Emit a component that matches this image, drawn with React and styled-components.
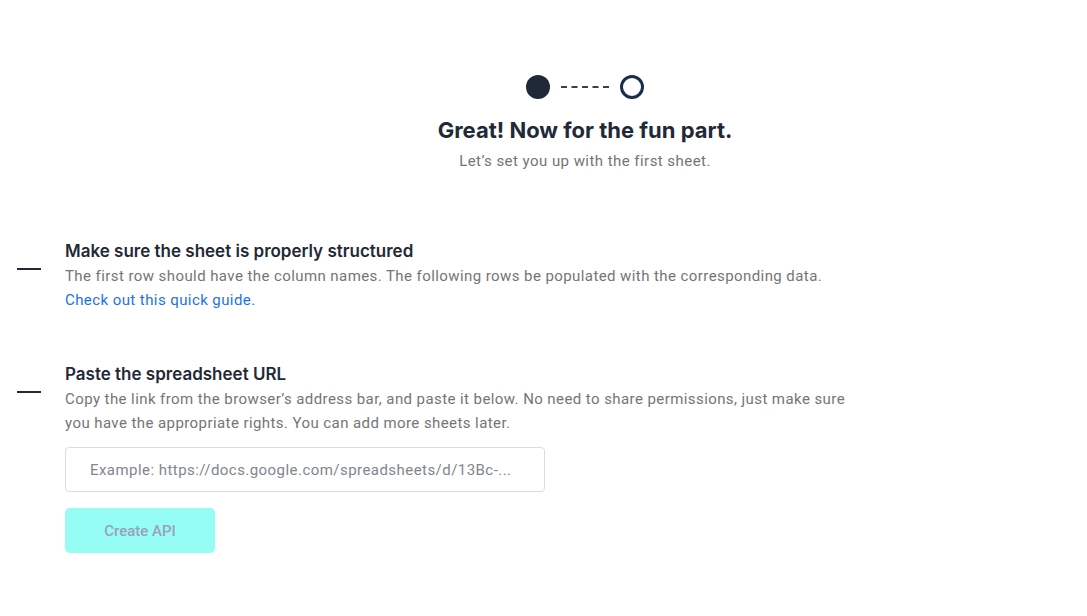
import styled, { createGlobalStyle } from "styled-components";

const GlobalStyle = createGlobalStyle`
  html, body {
    margin: 0;
    padding: 0;
    background: #ffffff;
    font-family: Inter, "Noto Sans", sans-serif;
  }
`;

const Page = styled.div`
  width: 1087px;
  min-height: 616px;
  box-sizing: border-box;
  padding-top: 75px;
`;

const Header = styled.header`
  display: flex;
  flex-direction: column;
  align-items: center;
  padding-left: 83px;
`;

const Stepper = styled.div`
  display: flex;
  align-items: center;
  gap: 11px;
`;

const Dot = styled.span`
  width: 24px;
  height: 24px;
  border-radius: 50%;
  box-sizing: border-box;
  background: ${(p) => (p.$done ? "#1f2937" : "#ffffff")};
  border: ${(p) => (p.$done ? "none" : "3px solid #1b2d4f")};
`;

const Dashes = styled.span`
  width: 48px;
  height: 0;
  border-top: 2px dashed #374151;
`;

const Title = styled.h1`
  margin: 16px 0 0;
  font-size: 22px;
  line-height: 30px;
  font-weight: 700;
  color: #1f2937;
`;

const Subtitle = styled.p`
  margin: 5px 0 0;
  font-family: Roboto, "Noto Sans", sans-serif;
  font-size: 15px;
  line-height: 22px;
  letter-spacing: 0.45px;
  color: #757575;
`;

const Steps = styled.section`
  margin-top: 67px;
  display: flex;
  flex-direction: column;
  gap: 50px;
`;

const Step = styled.div`
  display: grid;
  grid-template-columns: 65px 790px;
  align-items: start;
`;

const Marker = styled.span`
  margin: 29px 0 0 17px;
  width: 24px;
  height: 2px;
  background: #1f2937;
`;

const StepBody = styled.div`
  display: flex;
  flex-direction: column;
`;

const StepTitle = styled.h2`
  margin: 0 0 1px;
  font-size: 17px;
  line-height: 24px;
  font-weight: 600;
  color: #1f2937;
`;

const Text = styled.p`
  margin: 0;
  font-family: Roboto, "Noto Sans", sans-serif;
  font-size: 15px;
  line-height: 24px;
  letter-spacing: 0.42px;
  color: #757575;
`;

const Link = styled.a`
  font-family: Roboto, "Noto Sans", sans-serif;
  font-size: 15px;
  line-height: 24px;
  letter-spacing: 0.42px;
  color: #1a73e8;
  text-decoration: none;
`;

const UrlInput = styled.input`
  margin-top: 12px;
  width: 480px;
  height: 45px;
  box-sizing: border-box;
  padding: 0 24px;
  border: 1px solid #d9dde3;
  border-radius: 4px;
  font-family: Roboto, "Noto Sans", sans-serif;
  font-size: 15px;
  letter-spacing: 0.45px;
  color: #374151;
  outline: none;

  &::placeholder {
    color: #80868e;
  }
`;

const Button = styled.button`
  margin-top: 16px;
  width: 150px;
  height: 45px;
  border: none;
  border-radius: 5px;
  background: #96fdf4;
  color: #9aa0b8;
  font-family: Roboto, "Noto Sans", sans-serif;
  font-size: 15px;
  font-weight: 500;
  cursor: not-allowed;
`;

export default function App() {
  return (
    <Page>
      <GlobalStyle />
      <Header>
        <Stepper>
          <Dot $done />
          <Dashes />
          <Dot />
        </Stepper>
        <Title>Great! Now for the fun part.</Title>
        <Subtitle>Let’s set you up with the first sheet.</Subtitle>
      </Header>

      <Steps>
        <Step>
          <Marker />
          <StepBody>
            <StepTitle>Make sure the sheet is properly structured</StepTitle>
            <Text>
              The first row should have the column names. The following rows be
              populated with the corresponding data.
            </Text>
            <div>
              <Link href="#">Check out this quick guide.</Link>
            </div>
          </StepBody>
        </Step>

        <Step>
          <Marker />
          <StepBody>
            <StepTitle>Paste the spreadsheet URL</StepTitle>
            <Text>
              Copy the link from the browser’s address bar, and paste it below.
              No need to share permissions, just make sure you have the
              appropriate rights. You can add more sheets later.
            </Text>
            <div>
              <UrlInput placeholder="Example: https://docs.google.com/spreadsheets/d/13Bc-..." />
            </div>
            <div>
              <Button disabled>Create API</Button>
            </div>
          </StepBody>
        </Step>
      </Steps>
    </Page>
  );
}
